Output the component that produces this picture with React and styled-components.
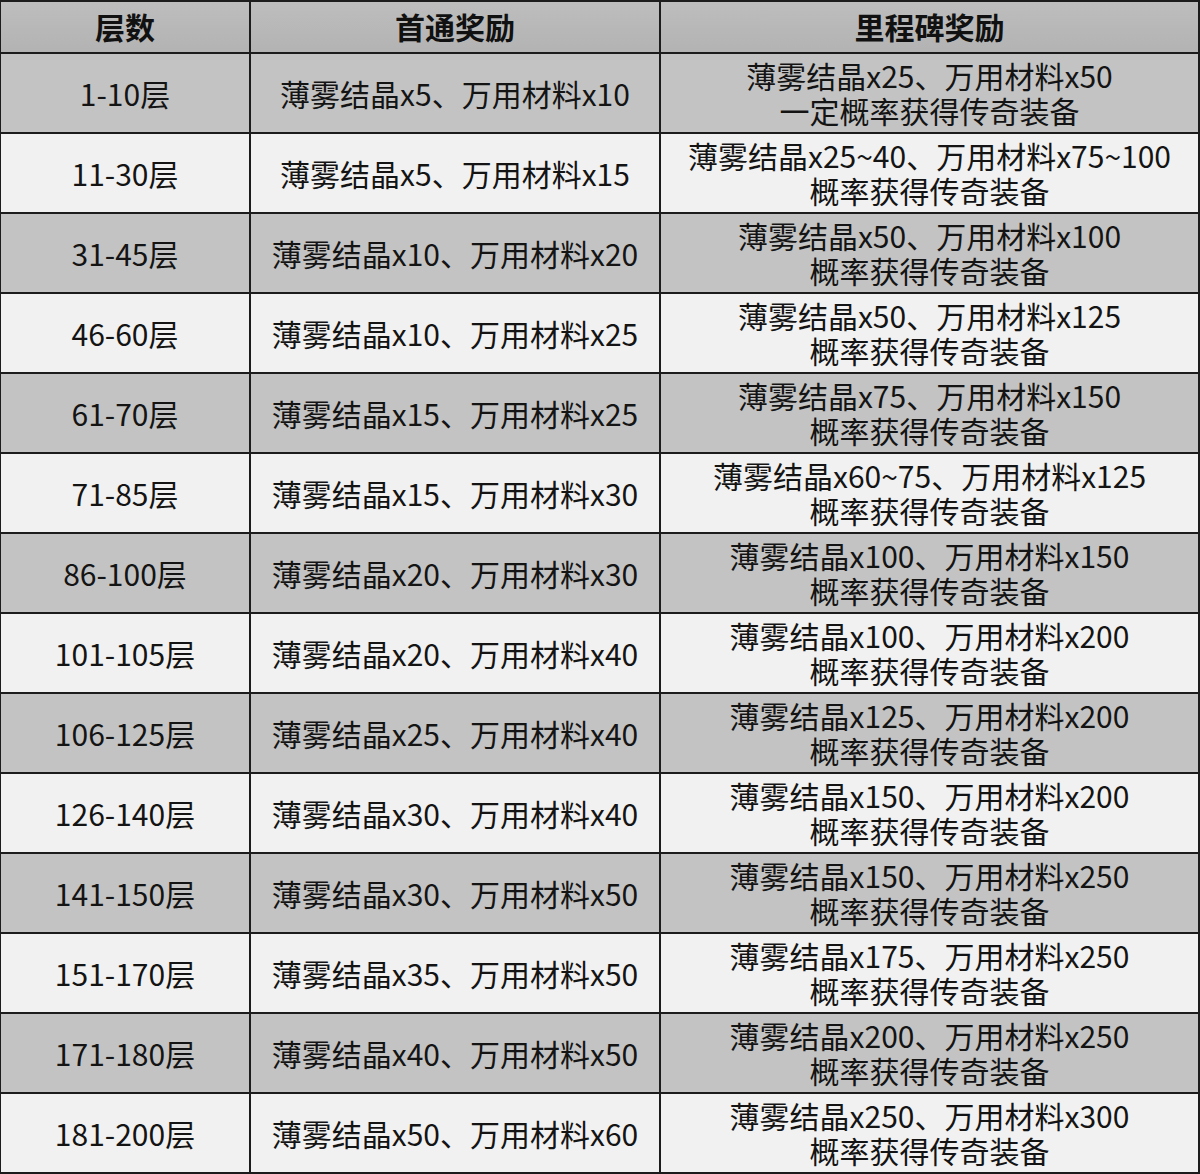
import { Fragment } from "react";
import styled, { createGlobalStyle } from "styled-components";

const GlobalStyle = createGlobalStyle`
  html, body {
    margin: 0;
    padding: 0;
    background: #ffffff;
  }
`;

const rows = [
  ["1-10层", "薄雾结晶x5、万用材料x10", ["薄雾结晶x25、万用材料x50", "一定概率获得传奇装备"]],
  ["11-30层", "薄雾结晶x5、万用材料x15", ["薄雾结晶x25~40、万用材料x75~100", "概率获得传奇装备"]],
  ["31-45层", "薄雾结晶x10、万用材料x20", ["薄雾结晶x50、万用材料x100", "概率获得传奇装备"]],
  ["46-60层", "薄雾结晶x10、万用材料x25", ["薄雾结晶x50、万用材料x125", "概率获得传奇装备"]],
  ["61-70层", "薄雾结晶x15、万用材料x25", ["薄雾结晶x75、万用材料x150", "概率获得传奇装备"]],
  ["71-85层", "薄雾结晶x15、万用材料x30", ["薄雾结晶x60~75、万用材料x125", "概率获得传奇装备"]],
  ["86-100层", "薄雾结晶x20、万用材料x30", ["薄雾结晶x100、万用材料x150", "概率获得传奇装备"]],
  ["101-105层", "薄雾结晶x20、万用材料x40", ["薄雾结晶x100、万用材料x200", "概率获得传奇装备"]],
  ["106-125层", "薄雾结晶x25、万用材料x40", ["薄雾结晶x125、万用材料x200", "概率获得传奇装备"]],
  ["126-140层", "薄雾结晶x30、万用材料x40", ["薄雾结晶x150、万用材料x200", "概率获得传奇装备"]],
  ["141-150层", "薄雾结晶x30、万用材料x50", ["薄雾结晶x150、万用材料x250", "概率获得传奇装备"]],
  ["151-170层", "薄雾结晶x35、万用材料x50", ["薄雾结晶x175、万用材料x250", "概率获得传奇装备"]],
  ["171-180层", "薄雾结晶x40、万用材料x50", ["薄雾结晶x200、万用材料x250", "概率获得传奇装备"]],
  ["181-200层", "薄雾结晶x50、万用材料x60", ["薄雾结晶x250、万用材料x300", "概率获得传奇装备"]],
];

const TableStyle = styled.div`
  display: grid;
  grid-template-columns: 248px 408px 1fr;
  grid-template-rows: 50px repeat(14, 78px);
  gap: 2px;
  padding: 2px 2px 2px 1px;
  width: 1200px;
  box-sizing: border-box;
  background: #1c1c1c;
  font-family: "Noto Sans CJK SC", "Noto Sans", sans-serif;
  color: #141414;
`;

const HeadCellStyle = styled.div`
  display: flex;
  align-items: center;
  justify-content: center;
  background: linear-gradient(#bdbdbd, #b3b3b3);
  font-size: 30px;
  font-weight: 700;
  color: #111;
  padding-bottom: 2px;
`;

const CellStyle = styled.div`
  display: flex;
  flex-direction: column;
  align-items: center;
  justify-content: center;
  background: ${({ $shaded }) => ($shaded ? "#c3c3c3" : "#f1f1f1")};
  font-size: 30px;
  line-height: 35px;
  white-space: nowrap;
`;

const LineStyle = styled.span`
  display: block;
  height: 35px;
`;

const App = () => {
  return (
    <>
      <GlobalStyle />
      <TableStyle>
        <HeadCellStyle>层数</HeadCellStyle>
        <HeadCellStyle>首通奖励</HeadCellStyle>
        <HeadCellStyle>里程碑奖励</HeadCellStyle>
        {rows.map(([floor, first, milestone], i) => (
          <Fragment key={floor}>
            <CellStyle $shaded={i % 2 === 0}>{floor}</CellStyle>
            <CellStyle $shaded={i % 2 === 0}>{first}</CellStyle>
            <CellStyle $shaded={i % 2 === 0}>
              {milestone.map((line) => (
                <LineStyle key={line}>{line}</LineStyle>
              ))}
            </CellStyle>
          </Fragment>
        ))}
      </TableStyle>
    </>
  );
};

export default App;
